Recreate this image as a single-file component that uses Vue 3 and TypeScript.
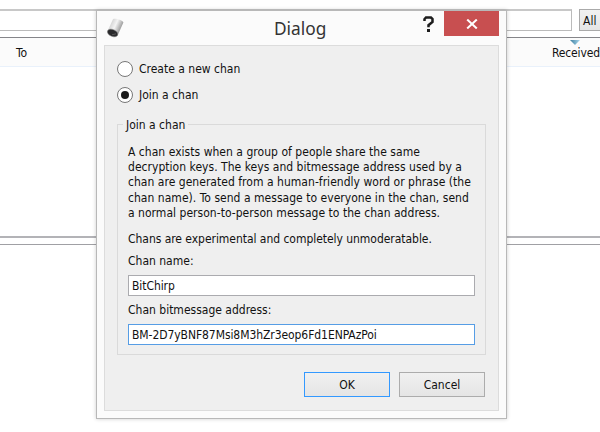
<script setup lang="ts">
import { ref } from 'vue'

const mode = ref<'create' | 'join'>('join')
const chanName = ref('BitChirp')
const address = ref('BM-2D7yBNF87Msi8M3hZr3eop6Fd1ENPAzPoi')

const description: string[] = [
  'A chan exists when a group of people share the same',
  'decryption keys. The keys and bitmessage address used by a',
  'chan are generated from a human-friendly word or phrase (the',
  'chan name). To send a message to everyone in the chan, send',
  'a normal person-to-person message to the chan address.',
]
</script>

<template>
  <div class="screen">
    <main class="window">
      <div class="search-row">
        <div class="search-field"></div>
        <div class="filter">All</div>
      </div>
      <div class="table-head">
        <span class="col-to">To</span>
        <span class="col-received">
          <svg class="sort" width="10" height="5" viewBox="0 0 10 5">
            <defs>
              <linearGradient id="sortFill" x1="0" x2="1" y1="0" y2="0">
                <stop offset="0" stop-color="#3f7f9f" />
                <stop offset="1" stop-color="#a9d8ee" />
              </linearGradient>
            </defs>
            <path d="M0 0H10L5 5Z" fill="url(#sortFill)" />
          </svg>
          Received
        </span>
      </div>
      <div class="table-body"></div>
      <div class="splitter"></div>
      <div class="preview"></div>
    </main>

    <section class="dialog">
      <header class="titlebar">
        <svg class="app-icon" width="18" height="20" viewBox="0 0 18 20">
          <defs>
            <linearGradient id="tube" x1="0" y1="0" x2="1" y2="0.5">
              <stop offset="0" stop-color="#8d8d8d" />
              <stop offset="0.3" stop-color="#d8d8d8" />
              <stop offset="0.55" stop-color="#f4f4f4" />
              <stop offset="0.8" stop-color="#b4b4b4" />
              <stop offset="1" stop-color="#858585" />
            </linearGradient>
          </defs>
          <path d="M0.6 13L6 1.2C8 0 15 2 16.4 4.4L10.6 17.4C8 19 1 16 0.6 13Z" fill="url(#tube)" />
          <ellipse cx="5.6" cy="15" rx="5.4" ry="3.4" transform="rotate(24 5.6 15)" fill="#29292b" stroke="#777" stroke-width="0.5" />
          <path d="M5 16.8L9 15.8" stroke="#555" stroke-width="1" />
        </svg>
        <h1 class="title">Dialog</h1>
        <svg class="help" width="11" height="17" viewBox="0 0 11 17">
          <path d="M1.5 5V3.2L3 1.5H8L9.5 3V6L5.5 9.2V11.2" fill="none" stroke="#1d1d1d" stroke-width="2.5" />
          <rect x="4" y="13" width="3" height="3" fill="#1d1d1d" />
        </svg>
        <button class="close" type="button" aria-label="Close">
          <svg width="12" height="10" viewBox="0 0 12 10">
            <path d="M1.2 0.6L10.8 9.4M10.8 0.6L1.2 9.4" stroke="#fff" stroke-width="2.1" />
          </svg>
        </button>
      </header>

      <div class="content">
        <label class="radio">
          <span class="dot" :class="{ on: mode === 'create' }" @click="mode = 'create'"></span>
          <span>Create a new chan</span>
        </label>
        <label class="radio">
          <span class="dot" :class="{ on: mode === 'join' }" @click="mode = 'join'"></span>
          <span>Join a chan</span>
        </label>

        <div class="group">
          <span class="legend">Join a chan</span>
          <p class="desc">
            <span v-for="line in description" :key="line" class="line">{{ line }}</span>
          </p>
          <p class="note">Chans are experimental and completely unmoderatable.</p>
          <div class="label">Chan name:</div>
          <input v-model="chanName" class="field" type="text" />
          <div class="label second">Chan bitmessage address:</div>
          <input v-model="address" class="field focused" type="text" />
        </div>

        <footer class="actions">
          <button class="btn primary" type="button">OK</button>
          <button class="btn" type="button">Cancel</button>
        </footer>
      </div>
    </section>
  </div>
</template>

<style>
body {
  overflow: hidden;
  background: #fff;
}
</style>

<style scoped>
* {
  box-sizing: border-box;
}
.screen {
  position: relative;
  width: 600px;
  height: 432px;
  overflow: hidden;
  background: #fff;
  color: #111;
  font-family: 'DejaVu Sans Condensed', 'DejaVu Sans', sans-serif;
  font-stretch: condensed;
  font-size: 12px;
}
.window {
  display: flex;
  flex-direction: column;
  height: 100%;
  padding-top: 9px;
}
.search-row {
  display: flex;
  gap: 7px;
  height: 22px;
  flex: none;
}
.search-field {
  flex: none;
  width: 572px;
  border: 1px solid #bbb;
  border-left: 0;
  border-top: 2px solid #c8c8c8;
}
.filter {
  flex: none;
  width: 30px;
  border: 1px solid #aaa;
  background: linear-gradient(#f1f1f1, #e5e5e5);
  padding-left: 3px;
  line-height: 22px;
}
.table-head {
  display: flex;
  justify-content: space-between;
  flex: none;
  margin-top: 6px;
  height: 30px;
  border-top: 1px solid #858589;
  border-bottom: 1px solid #e9f1fb;
  background: #fbfbfb;
  line-height: 31px;
}
.col-to {
  padding-left: 16px;
}
.col-received {
  position: relative;
  width: 48px;
  white-space: nowrap;
  letter-spacing: -0.15px;
}
.sort {
  position: absolute;
  left: 18px;
  top: 2px;
}
.table-body {
  flex: none;
  height: 169px;
}
.splitter {
  flex: none;
  height: 9px;
  border-top: 2px solid #b3b3b7;
  border-bottom: 1px solid #a0a0a4;
}
.preview {
  flex: 1;
}
.dialog {
  position: absolute;
  left: 96px;
  top: 10px;
  width: 411px;
  height: 409px;
  display: flex;
  flex-direction: column;
  padding: 0 7px 7px;
  border: 1px solid #b8b8b8;
  background: #fbfbfb;
  box-shadow: 0 0 4px rgba(0, 0, 0, 0.2);
}
.titlebar {
  display: flex;
  flex: none;
  height: 34px;
}
.app-icon {
  flex: none;
  margin: 7px 0 0 3px;
}
.title {
  flex: none;
  width: 56px;
  margin: 0 0 0 149px;
  color: #333;
  font: 400 17.3px/36px 'Noto Sans', sans-serif;
}
.help {
  flex: none;
  margin: 5px 0 0 93px;
}
.close {
  display: flex;
  align-items: center;
  justify-content: center;
  flex: none;
  width: 55px;
  height: 25px;
  margin-left: 10px;
  padding: 0;
  border: 0;
  background: #c84f50;
}
.content {
  display: flex;
  flex: 1;
  flex-direction: column;
  border: 1px solid #dcdcdc;
  background: #efefef;
  padding: 12px 12px 0;
}
.radio {
  display: flex;
  align-items: center;
  gap: 6px;
  height: 22px;
  margin-bottom: 4px;
}
.radio + .radio {
  margin-bottom: 0;
}
.dot {
  display: flex;
  align-items: center;
  justify-content: center;
  width: 16px;
  height: 16px;
  border: 1px solid #777;
  border-radius: 50%;
  background: #fff;
}
.dot.on::after {
  content: '';
  width: 8px;
  height: 8px;
  border-radius: 50%;
  background: #1c1c1c;
}
.group {
  position: relative;
  height: 231px;
  margin-top: 18px;
  padding: 20px 10px 0;
  border: 1px solid #dadada;
}
.legend {
  position: absolute;
  left: 5px;
  top: -8px;
  padding: 0 3px;
  background: #efefef;
  line-height: 16px;
}
.desc,
.note {
  margin: 0;
  white-space: nowrap;
}
.line {
  display: block;
  height: 15.2px;
  line-height: 15.2px;
  letter-spacing: 0.03px;
}
.note {
  margin-top: 11px;
  line-height: 15px;
  letter-spacing: -0.04px;
}
.label {
  margin-top: 7px;
  height: 15px;
  line-height: 15px;
}
.label.second {
  margin-top: 7px;
}
.field {
  display: block;
  width: 347px;
  height: 21px;
  margin-top: 6px;
  padding: 1px 3px 0;
  border: 1px solid #ababaf;
  outline: 0;
  background: #fff;
  color: inherit;
  font: inherit;
  letter-spacing: -0.07px;
}
.focused {
  border-color: #569de5;
}
.actions {
  display: flex;
  justify-content: flex-end;
  gap: 9px;
  margin: 17px 1px 0 0;
}
.btn {
  width: 86px;
  height: 25px;
  padding: 1px 0 0;
  border: 1px solid #acacac;
  background: linear-gradient(#f0f0f0, #e5e5e5);
  color: inherit;
  font: inherit;
}
.primary {
  border-color: #3399ff;
}
</style>
